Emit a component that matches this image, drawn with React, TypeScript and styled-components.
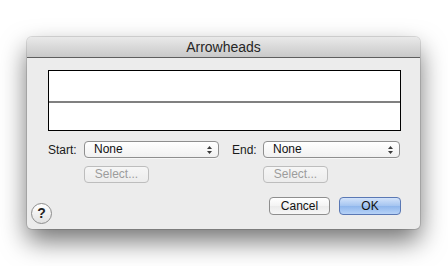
import styled, { createGlobalStyle } from "styled-components";

const GlobalStyle = createGlobalStyle`
  body {
    margin: 0;
    background: #ffffff;
    font-family: "Liberation Sans", "DejaVu Sans", sans-serif;
  }
`;

export default function App() {
  return (
    <>
      <GlobalStyle />
      <Page>
        <Window>
          <TitleBar>Arrowheads</TitleBar>
          <Content>
            <Preview>
              <PreviewCell />
              <PreviewCell />
            </Preview>
            <Fields>
              <Label>Start:</Label>
              <Popup>
                None
                <Arrows />
              </Popup>
              <Label $indent>End:</Label>
              <Popup>
                None
                <Arrows />
              </Popup>
              <span />
              <DisabledButton>Select...</DisabledButton>
              <span />
              <DisabledButton>Select...</DisabledButton>
            </Fields>
            <Footer>
              <HelpButton>?</HelpButton>
              <Buttons>
                <PushButton>Cancel</PushButton>
                <PushButton $primary>OK</PushButton>
              </Buttons>
            </Footer>
          </Content>
        </Window>
      </Page>
    </>
  );
}

const Arrows = () => (
  <ArrowIcon width="7" height="10" viewBox="0 0 7 10">
    <path d="M3.5 1 L6 4 L1 4 Z" fill="#3a3a3a" />
    <path d="M3.5 9 L6 6 L1 6 Z" fill="#3a3a3a" />
  </ArrowIcon>
);

const Page = styled.div`
  padding: 37px 0 0 27px;
  height: 266px;
  box-sizing: border-box;
`;

const Window = styled.div`
  width: 393px;
  height: 192px;
  border-radius: 5px;
  background: #ececec;
  overflow: hidden;
  box-shadow: 0 12px 26px rgba(0, 0, 0, 0.55), 0 0 0 1px rgba(0, 0, 0, 0.12);
  display: flex;
  flex-direction: column;
`;

const TitleBar = styled.div`
  height: 20px;
  line-height: 21px;
  text-align: center;
  font-size: 14px;
  color: #262626;
  background: linear-gradient(#e9e9e9, #c9c9c9);
  border-bottom: 1px solid #5e5e5e;
`;

const Content = styled.div`
  flex: 1;
  display: flex;
  flex-direction: column;
  padding: 12px 19px 0 21px;
`;

const Preview = styled.div`
  height: 61px;
  box-sizing: border-box;
  border: 1px solid #000;
  background: #fff;
  display: grid;
  grid-template-rows: 1fr 1fr;
`;

const PreviewCell = styled.div`
  & + & {
    border-top: 2px solid #808080;
  }
`;

const Fields = styled.div`
  display: grid;
  grid-template-columns: 36px 135px 44px 137px;
  grid-template-rows: 17px 17px;
  row-gap: 8px;
  margin-top: 10px;
  align-items: center;
`;

const Label = styled.label<{ $indent?: boolean }>`
  font-size: 12px;
  color: #1a1a1a;
  padding-left: ${(p) => (p.$indent ? "13px" : "0")};
`;

const Popup = styled.div`
  position: relative;
  height: 17px;
  box-sizing: border-box;
  border: 1px solid #8f8f8f;
  border-radius: 4px;
  background: linear-gradient(#ffffff, #f1f1f1);
  font-size: 12px;
  line-height: 15px;
  padding-left: 9px;
  color: #111;
  box-shadow: 0 1px 0 rgba(255, 255, 255, 0.6);
`;

const ArrowIcon = styled.svg`
  position: absolute;
  right: 5px;
  top: 3px;
`;

const DisabledButton = styled.div`
  width: 65px;
  height: 17px;
  box-sizing: border-box;
  border: 1px solid #bdbdbd;
  border-radius: 4px;
  background: linear-gradient(#f6f6f6, #ececec);
  font-size: 12px;
  line-height: 15px;
  text-align: center;
  color: #9c9c9c;
`;

const Footer = styled.div`
  display: flex;
  justify-content: space-between;
  margin-top: 14px;
`;

const HelpButton = styled.div`
  width: 21px;
  height: 21px;
  box-sizing: border-box;
  margin: 6px 0 0 -17px;
  border-radius: 50%;
  border: 1px solid #8c8c8c;
  background: linear-gradient(#ffffff, #e2e2e2);
  font-size: 14px;
  font-weight: bold;
  line-height: 19px;
  text-align: center;
  color: #222;
`;

const Buttons = styled.div`
  display: flex;
  gap: 9px;
`;

const PushButton = styled.div<{ $primary?: boolean }>`
  width: ${(p) => (p.$primary ? "62px" : "61px")};
  height: 18px;
  box-sizing: border-box;
  border-radius: 4px;
  border: 1px solid ${(p) => (p.$primary ? "#5a78b4" : "#8e8e8e")};
  background: ${(p) =>
    p.$primary
      ? "linear-gradient(#d3e3fa, #a4c4f0 50%, #8fb6ec 51%, #b6d2f7)"
      : "linear-gradient(#ffffff, #f3f3f3 50%, #ebebeb 51%, #f7f7f7)"};
  font-size: 12px;
  line-height: 16px;
  text-align: center;
  color: #111;
`;
